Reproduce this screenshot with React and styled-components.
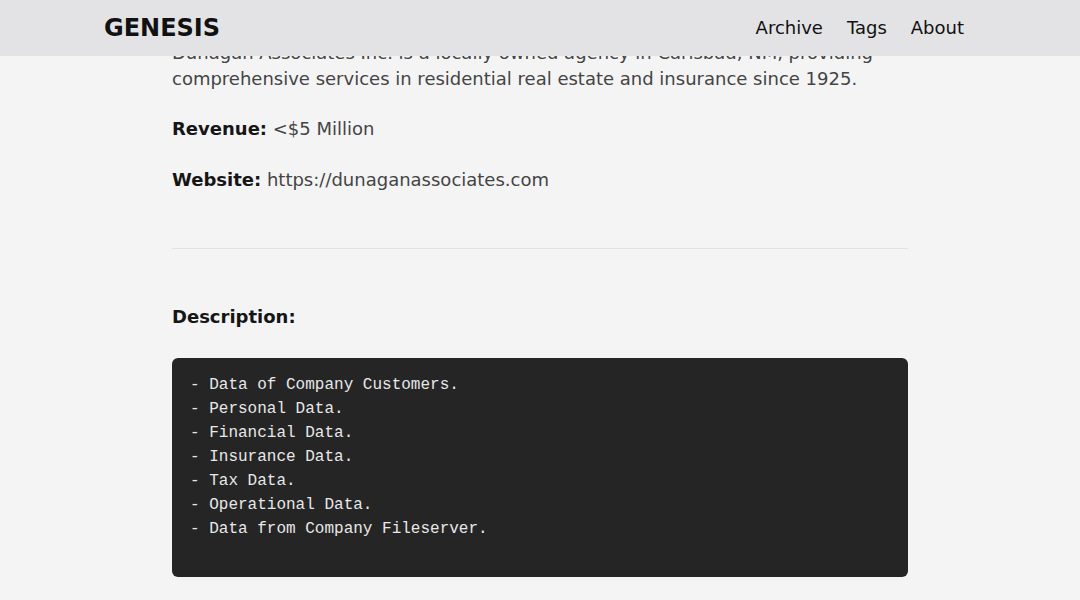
import React from "react";
import styled, { createGlobalStyle } from "styled-components";

const Global = createGlobalStyle`
  html, body { margin: 0; padding: 0; }
  body {
    background: #f4f4f4;
    font-family: "DejaVu Sans", "Noto Sans", sans-serif;
    color: #444;
  }
`;

const Header = styled.header`
  position: fixed;
  top: 0;
  left: 0;
  right: 0;
  height: 56px;
  background: #e3e3e5;
  z-index: 10;
  display: flex;
  align-items: center;
  justify-content: space-between;
  padding: 0 116px 0 104px;
`;

const Logo = styled.a`
  font-size: 24px;
  font-weight: 700;
  color: #111;
  text-decoration: none;
`;

const Nav = styled.nav`
  display: flex;
  gap: 24px;
  margin-top: -1px;
`;

const NavLink = styled.a`
  font-size: 18px;
  color: #111;
  text-decoration: none;
`;

const Main = styled.main`
  width: 736px;
  margin: 0 auto;
  padding-top: 40px;
  padding-bottom: 40px;
`;

const Para = styled.p`
  margin: 0 0 ${(p) => p.$gap || 0}px;
  font-size: 18px;
  line-height: 26px;
  color: #444;
`;

const Label = styled.strong`
  color: #161616;
  font-weight: 700;
`;

const Rule = styled.hr`
  border: 0;
  border-top: 1px solid #e2e2e2;
  margin: 55px 0 55px;
`;

const Heading = styled.p`
  margin: 0 0 28px;
  font-size: 18px;
  line-height: 26px;
  font-weight: 700;
  color: #161616;
`;

const Code = styled.pre`
  margin: 0;
  background: #252525;
  color: #e8e8e8;
  border-radius: 6px;
  padding: 15px 18px 36px;
  font-family: "Liberation Mono", "DejaVu Sans Mono", monospace;
  font-size: 16px;
  line-height: 24px;
  white-space: pre;
`;

const lines = [
  "- Data of Company Customers.",
  "- Personal Data.",
  "- Financial Data.",
  "- Insurance Data.",
  "- Tax Data.",
  "- Operational Data.",
  "- Data from Company Fileserver.",
];

export default function App() {
  return (
    <>
      <Global />
      <Header>
        <Logo href="#">GENESIS</Logo>
        <Nav>
          <NavLink href="#">Archive</NavLink>
          <NavLink href="#">Tags</NavLink>
          <NavLink href="#">About</NavLink>
        </Nav>
      </Header>
      <Main>
        <Para $gap={24}>
          Dunagan Associates Inc. is a locally owned agency in Carlsbad, NM, providing
          comprehensive services in residential real estate and insurance since 1925.
        </Para>
        <Para $gap={25}>
          <Label>Revenue:</Label> &lt;$5 Million
        </Para>
        <Para>
          <Label>Website:</Label> https://dunaganassociates.com
        </Para>
        <Rule />
        <Heading>Description:</Heading>
        <Code>{lines.join("\n")}</Code>
      </Main>
    </>
  );
}
